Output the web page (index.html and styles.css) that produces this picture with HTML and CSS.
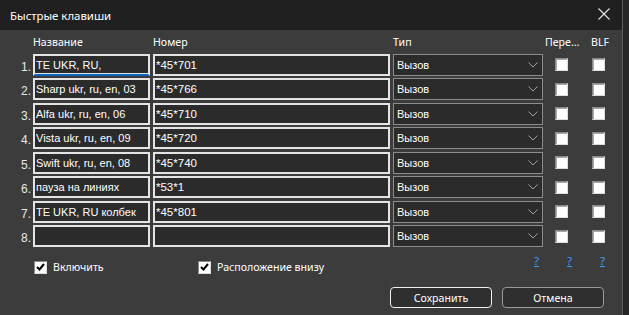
FILE: index.html
```html
<!DOCTYPE html>
<html lang="ru">
<head>
<meta charset="utf-8">
<link rel="stylesheet" href="styles.css">
</head>
<body>
<div class="page">
<div class="window">
  <div class="titlebar">
    <span class="title">Быстрые клавиши</span>
    <svg class="close" width="12" height="12" viewBox="0 0 12 12"><path d="M0.5 0.5 L11.5 11.5 M11.5 0.5 L0.5 11.5" stroke="#e6e6e6" stroke-width="1.1" fill="none"/></svg>
  </div>
  <div class="content">
    <div class="grid">
      <div class="hd"></div>
      <div class="hd">Название</div>
      <div class="hd">Номер</div>
      <div class="hd">Тип</div>
      <div class="hd">Пере...</div>
      <div class="hd hd-blf">BLF</div>

      <div class="num">1.</div>
      <div class="cell"><div class="inp focus">TE UKR, RU,</div></div>
      <div class="cell"><div class="inp wide">*45*701</div></div>
      <div class="cell"><div class="sel">Вызов<svg class="chev" width="10" height="6" viewBox="0 0 10 6"><path d="M0.5 0.5 L5 5 L9.5 0.5" stroke="#a0a0a0" fill="none"/></svg></div></div>
      <div class="cb-cell"><span class="cb"></span></div>
      <div class="cb-cell blf"><span class="cb"></span></div>

      <div class="num">2.</div>
      <div class="cell"><div class="inp">Sharp ukr, ru, en, 03</div></div>
      <div class="cell"><div class="inp wide">*45*766</div></div>
      <div class="cell"><div class="sel">Вызов<svg class="chev" width="10" height="6" viewBox="0 0 10 6"><path d="M0.5 0.5 L5 5 L9.5 0.5" stroke="#a0a0a0" fill="none"/></svg></div></div>
      <div class="cb-cell"><span class="cb"></span></div>
      <div class="cb-cell blf"><span class="cb"></span></div>

      <div class="num">3.</div>
      <div class="cell"><div class="inp">Alfa ukr, ru, en, 06</div></div>
      <div class="cell"><div class="inp wide">*45*710</div></div>
      <div class="cell"><div class="sel">Вызов<svg class="chev" width="10" height="6" viewBox="0 0 10 6"><path d="M0.5 0.5 L5 5 L9.5 0.5" stroke="#a0a0a0" fill="none"/></svg></div></div>
      <div class="cb-cell"><span class="cb"></span></div>
      <div class="cb-cell blf"><span class="cb"></span></div>

      <div class="num">4.</div>
      <div class="cell"><div class="inp">Vista ukr, ru, en, 09</div></div>
      <div class="cell"><div class="inp wide">*45*720</div></div>
      <div class="cell"><div class="sel">Вызов<svg class="chev" width="10" height="6" viewBox="0 0 10 6"><path d="M0.5 0.5 L5 5 L9.5 0.5" stroke="#a0a0a0" fill="none"/></svg></div></div>
      <div class="cb-cell"><span class="cb"></span></div>
      <div class="cb-cell blf"><span class="cb"></span></div>

      <div class="num">5.</div>
      <div class="cell"><div class="inp">Swift ukr, ru, en, 08</div></div>
      <div class="cell"><div class="inp wide">*45*740</div></div>
      <div class="cell"><div class="sel">Вызов<svg class="chev" width="10" height="6" viewBox="0 0 10 6"><path d="M0.5 0.5 L5 5 L9.5 0.5" stroke="#a0a0a0" fill="none"/></svg></div></div>
      <div class="cb-cell"><span class="cb"></span></div>
      <div class="cb-cell blf"><span class="cb"></span></div>

      <div class="num">6.</div>
      <div class="cell"><div class="inp">пауза на линиях</div></div>
      <div class="cell"><div class="inp wide">*53*1</div></div>
      <div class="cell"><div class="sel">Вызов<svg class="chev" width="10" height="6" viewBox="0 0 10 6"><path d="M0.5 0.5 L5 5 L9.5 0.5" stroke="#a0a0a0" fill="none"/></svg></div></div>
      <div class="cb-cell"><span class="cb"></span></div>
      <div class="cb-cell blf"><span class="cb"></span></div>

      <div class="num">7.</div>
      <div class="cell"><div class="inp">TE UKR, RU колбек</div></div>
      <div class="cell"><div class="inp wide">*45*801</div></div>
      <div class="cell"><div class="sel">Вызов<svg class="chev" width="10" height="6" viewBox="0 0 10 6"><path d="M0.5 0.5 L5 5 L9.5 0.5" stroke="#a0a0a0" fill="none"/></svg></div></div>
      <div class="cb-cell"><span class="cb"></span></div>
      <div class="cb-cell blf"><span class="cb"></span></div>

      <div class="num">8.</div>
      <div class="cell"><div class="inp"></div></div>
      <div class="cell"><div class="inp wide"></div></div>
      <div class="cell"><div class="sel">Вызов<svg class="chev" width="10" height="6" viewBox="0 0 10 6"><path d="M0.5 0.5 L5 5 L9.5 0.5" stroke="#a0a0a0" fill="none"/></svg></div></div>
      <div class="cb-cell"><span class="cb"></span></div>
      <div class="cb-cell blf"><span class="cb"></span></div>
    </div>

    <div class="options">
      <label class="opt opt-on"><span class="cb checked"><svg width="9" height="8" viewBox="0 0 9 8"><path d="M1 4 L3.5 6.5 L8 1" stroke="#000" stroke-width="2" fill="none"/></svg></span>Включить</label>
      <label class="opt opt-bottom"><span class="cb checked"><svg width="9" height="8" viewBox="0 0 9 8"><path d="M1 4 L3.5 6.5 L8 1" stroke="#000" stroke-width="2" fill="none"/></svg></span>Расположение внизу</label>
      <div class="helps">
        <a class="help">?</a>
        <a class="help">?</a>
        <a class="help last">?</a>
      </div>
    </div>

    <div class="buttons">
      <button class="btn btn-default">Сохранить</button>
      <button class="btn">Отмена</button>
    </div>
  </div>
</div>
</div>
</body>
</html>
```

FILE: styles.css
```css
html, body {
  margin: 0;
  padding: 0;
  background: #2b2b2b;
}
.page {
  width: 629px;
  height: 315px;
  overflow: hidden;
  background: #262626;
}
.window {
  width: 622px;
  height: 315px;
  background: #3c3c3c;
  border-right: 1px solid #5c5c5c;
  font-family: "Noto Sans", "Open Sans", sans-serif;
  color: #ffffff;
  display: flex;
  flex-direction: column;
}
.titlebar {
  height: 30px;
  flex: none;
  background: #202020;
  display: flex;
  align-items: center;
  justify-content: space-between;
  padding: 0 12px 0 10px;
}
.title {
  font-size: 11.4px;
  color: #ffffff;
}
.close {
  display: block;
  margin-top: -3px;
}
.content {
  padding-top: 4px;
}
.grid {
  display: grid;
  grid-template-columns: 33px 120px 240px 152px 42px 35px;
  grid-template-rows: 17px repeat(8, 22px);
  row-gap: 2.5px;
  align-items: center;
  font-family: "Liberation Sans", Arial, sans-serif;
}
.hd {
  font-family: "Noto Sans", "Open Sans", sans-serif;
  font-size: 10.6px;
  color: #ffffff;
  white-space: nowrap;
  align-self: start;
  padding-top: 1px;
}
.hd-blf {
  padding-left: 4px;
}
.num {
  text-align: right;
  padding-right: 2px;
  font-size: 12px;
  color: #e8e8e8;
  padding-top: 4px;
}
.cell {
  height: 22px;
}
.inp {
  box-sizing: border-box;
  width: 117px;
  height: 22px;
  border: 2px solid #e4e4e4;
  background: #2b2b2b;
  color: #ffffff;
  font-size: 11px;
  line-height: 18px;
  padding-left: 1px;
  white-space: nowrap;
  overflow: hidden;
}
.inp.wide {
  width: 237px;
  font-size: 11.5px;
}
.inp.focus {
  border-bottom: 2px solid #0a64ba;
  box-shadow: inset 0 -1px 0 #e4e4e4;
}
.sel {
  box-sizing: border-box;
  width: 150px;
  height: 22px;
  border: 1px solid #8c8c8c;
  background: #2b2b2b;
  color: #ffffff;
  font-size: 11px;
  line-height: 20px;
  padding-left: 3px;
  display: flex;
  align-items: center;
  justify-content: space-between;
  padding-right: 4px;
}
.chev {
  display: block;
}
.cb-cell {
  padding-left: 10px;
  display: flex;
  align-items: center;
}
.cb-cell.blf {
  padding-left: 5px;
}
.cb {
  box-sizing: border-box;
  display: inline-flex;
  align-items: center;
  justify-content: center;
  width: 13px;
  height: 13px;
  background: #ffffff;
  border: 1px solid #8a8a8a;
  border-right-color: #dcdcdc;
  border-bottom-color: #dcdcdc;
  box-shadow: inset 1px 1px 0 #a8a8a8;
  flex: none;
}
.cb.checked {
  box-shadow: none;
}
.options {
  display: flex;
  align-items: center;
  height: 22px;
  margin-top: 9px;
  font-family: "Noto Sans", "Open Sans", sans-serif;
  font-size: 10.6px;
  color: #ffffff;
}
.opt {
  display: flex;
  align-items: center;
  gap: 6px;
  flex: none;
}
.opt-on {
  margin-left: 34px;
  width: 164px;
}
.opt-bottom {
  width: 336px;
}
.helps {
  display: flex;
  flex: none;
  margin-top: -13px;
}
.help {
  color: #3b9cff;
  text-decoration: underline;
  font-size: 11.5px;
  width: 33px;
  flex: none;
}
.help.last {
  width: 10px;
}
.buttons {
  display: flex;
  gap: 10px;
  margin-top: 9px;
  padding-left: 390px;
}
.btn {
  box-sizing: border-box;
  width: 102px;
  height: 21px;
  border: 1px solid #9a9a9a;
  border-radius: 4px;
  background: #2f2f2f;
  color: #ffffff;
  font-family: "Noto Sans", "Open Sans", sans-serif;
  font-size: 10.6px;
  padding: 0;
}
.btn-default {
  border-color: #f0f0f0;
}
```
